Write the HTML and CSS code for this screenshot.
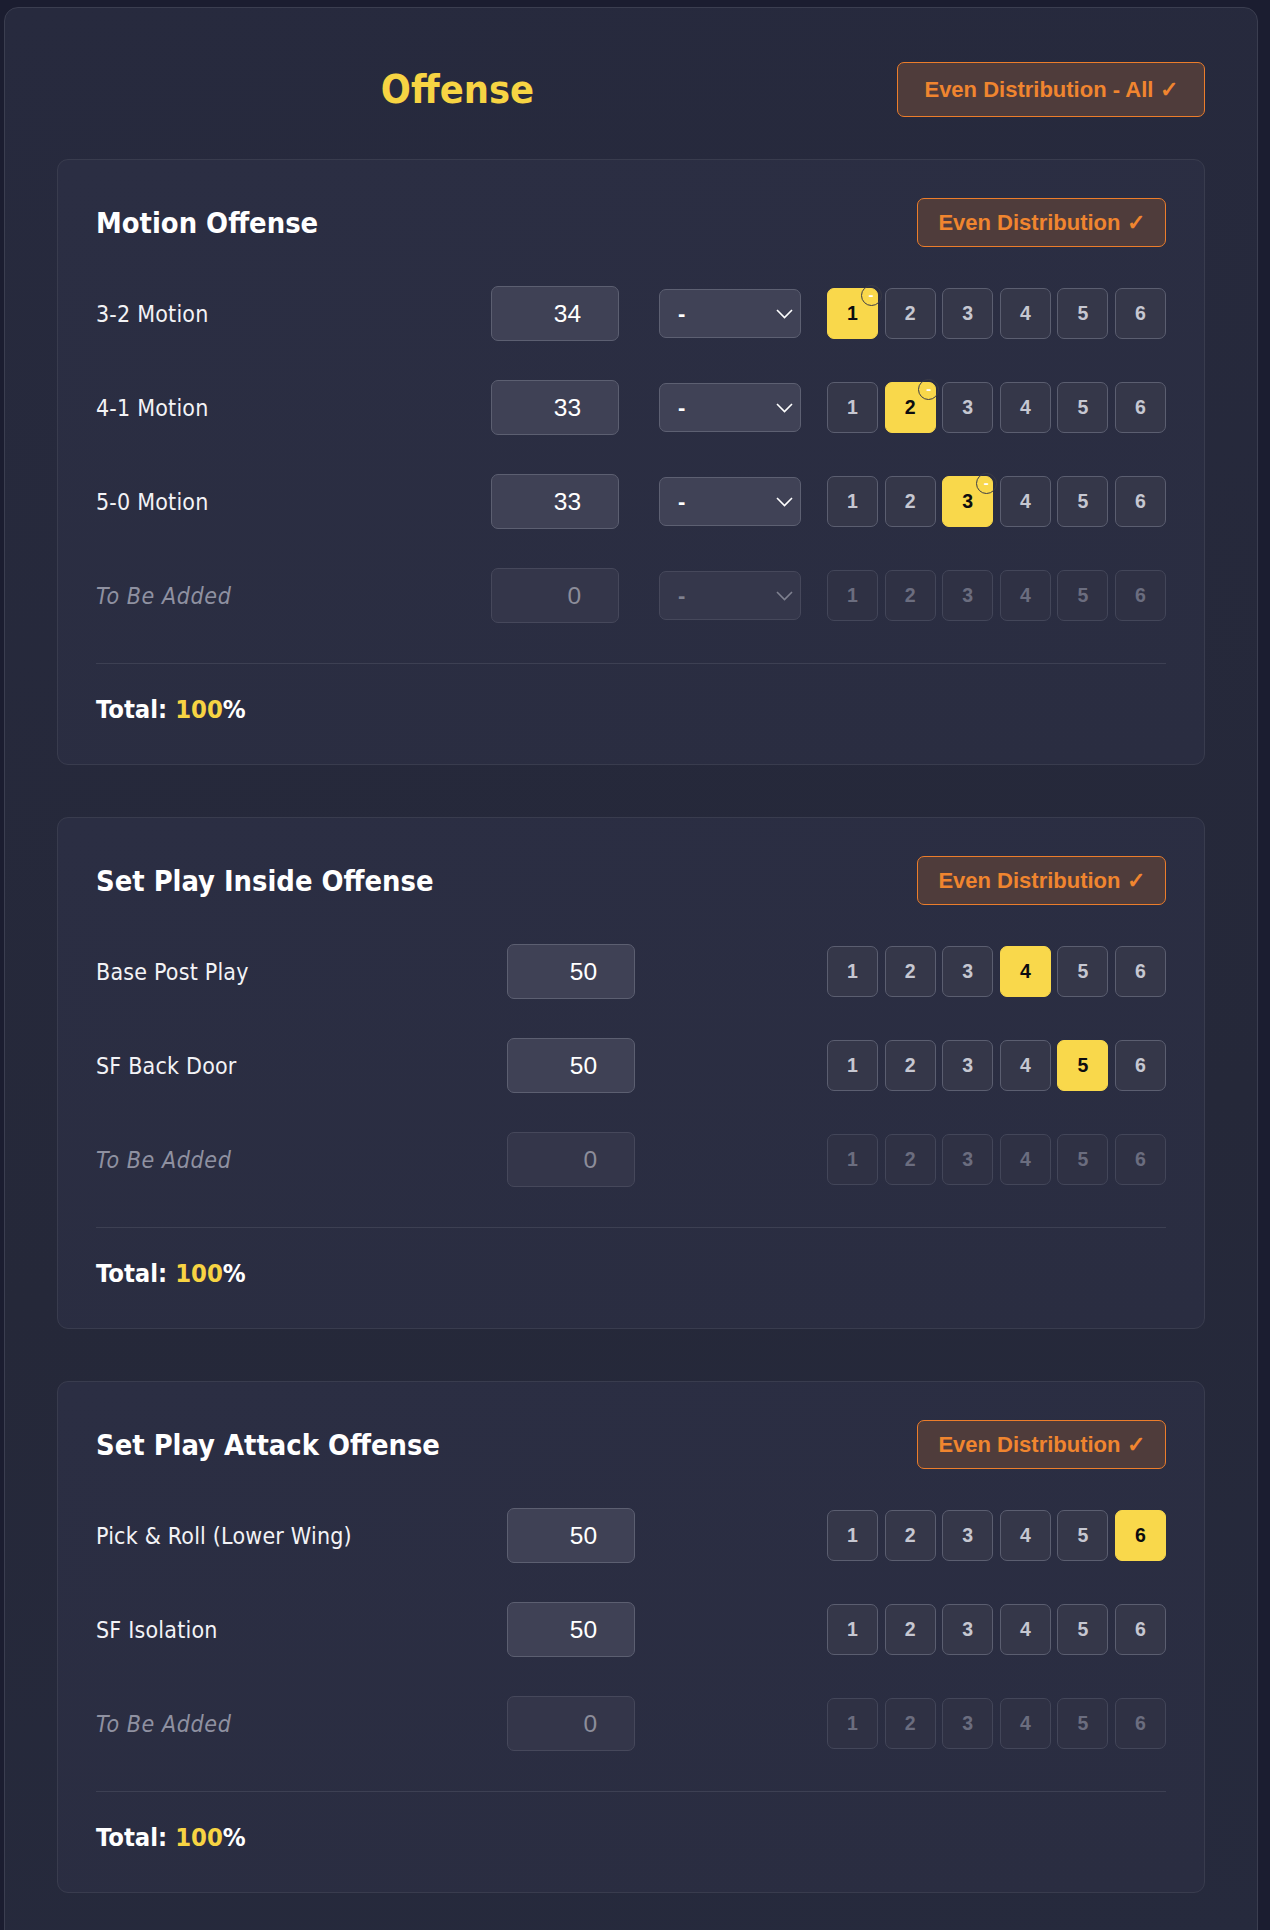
FILE: index.html
```html
<!DOCTYPE html>
<html lang="en">
<head>
<meta charset="utf-8">
<title>Offense</title>
<link rel="stylesheet" href="styles.css">
</head>
<body>
<div class="panel">
  <div class="panel-head">
    <h1 class="title">Offense</h1>
    <button class="even-btn even-all">Even Distribution - All ✓</button>
  </div>

  <div class="cards">
    <section class="card with-select">
      <div class="card-head">
        <h2>Motion Offense</h2>
        <button class="even-btn even-one">Even Distribution ✓</button>
      </div>
      <div class="rows">
        <div class="row">
          <span class="label">3-2 Motion</span>
          <input class="pct" type="number" value="34">
          <div class="select-wrap"><select class="sel"><option>-</option></select><svg class="chev" width="17" height="10" viewBox="0 0 17 10"><polyline points="1,1 8.5,8.5 16,1" fill="none" stroke="currentColor" stroke-width="1.6"/></svg></div>
          <div class="slots">
            <button class="slot active">1<span class="badge">-</span></button>
            <button class="slot">2</button>
            <button class="slot">3</button>
            <button class="slot">4</button>
            <button class="slot">5</button>
            <button class="slot">6</button>
          </div>
        </div>
        <div class="row">
          <span class="label">4-1 Motion</span>
          <input class="pct" type="number" value="33">
          <div class="select-wrap"><select class="sel"><option>-</option></select><svg class="chev" width="17" height="10" viewBox="0 0 17 10"><polyline points="1,1 8.5,8.5 16,1" fill="none" stroke="currentColor" stroke-width="1.6"/></svg></div>
          <div class="slots">
            <button class="slot">1</button>
            <button class="slot active">2<span class="badge">-</span></button>
            <button class="slot">3</button>
            <button class="slot">4</button>
            <button class="slot">5</button>
            <button class="slot">6</button>
          </div>
        </div>
        <div class="row">
          <span class="label">5-0 Motion</span>
          <input class="pct" type="number" value="33">
          <div class="select-wrap"><select class="sel"><option>-</option></select><svg class="chev" width="17" height="10" viewBox="0 0 17 10"><polyline points="1,1 8.5,8.5 16,1" fill="none" stroke="currentColor" stroke-width="1.6"/></svg></div>
          <div class="slots">
            <button class="slot">1</button>
            <button class="slot">2</button>
            <button class="slot active">3<span class="badge">-</span></button>
            <button class="slot">4</button>
            <button class="slot">5</button>
            <button class="slot">6</button>
          </div>
        </div>
        <div class="row disabled">
          <span class="label">To Be Added</span>
          <input class="pct" type="number" value="0" disabled>
          <div class="select-wrap off"><select class="sel" disabled><option>-</option></select><svg class="chev" width="17" height="10" viewBox="0 0 17 10"><polyline points="1,1 8.5,8.5 16,1" fill="none" stroke="currentColor" stroke-width="1.6"/></svg></div>
          <div class="slots">
            <button class="slot" disabled>1</button>
            <button class="slot" disabled>2</button>
            <button class="slot" disabled>3</button>
            <button class="slot" disabled>4</button>
            <button class="slot" disabled>5</button>
            <button class="slot" disabled>6</button>
          </div>
        </div>
      </div>
      <div class="total">Total: <span class="hl">100</span>%</div>
    </section>

    <section class="card plain">
      <div class="card-head">
        <h2>Set Play Inside Offense</h2>
        <button class="even-btn even-one">Even Distribution ✓</button>
      </div>
      <div class="rows">
        <div class="row">
          <span class="label">Base Post Play</span>
          <input class="pct" type="number" value="50">
          <div class="slots">
            <button class="slot">1</button>
            <button class="slot">2</button>
            <button class="slot">3</button>
            <button class="slot active">4</button>
            <button class="slot">5</button>
            <button class="slot">6</button>
          </div>
        </div>
        <div class="row">
          <span class="label">SF Back Door</span>
          <input class="pct" type="number" value="50">
          <div class="slots">
            <button class="slot">1</button>
            <button class="slot">2</button>
            <button class="slot">3</button>
            <button class="slot">4</button>
            <button class="slot active">5</button>
            <button class="slot">6</button>
          </div>
        </div>
        <div class="row disabled">
          <span class="label">To Be Added</span>
          <input class="pct" type="number" value="0" disabled>
          <div class="slots">
            <button class="slot" disabled>1</button>
            <button class="slot" disabled>2</button>
            <button class="slot" disabled>3</button>
            <button class="slot" disabled>4</button>
            <button class="slot" disabled>5</button>
            <button class="slot" disabled>6</button>
          </div>
        </div>
      </div>
      <div class="total">Total: <span class="hl">100</span>%</div>
    </section>

    <section class="card plain">
      <div class="card-head">
        <h2>Set Play Attack Offense</h2>
        <button class="even-btn even-one">Even Distribution ✓</button>
      </div>
      <div class="rows">
        <div class="row">
          <span class="label">Pick &amp; Roll (Lower Wing)</span>
          <input class="pct" type="number" value="50">
          <div class="slots">
            <button class="slot">1</button>
            <button class="slot">2</button>
            <button class="slot">3</button>
            <button class="slot">4</button>
            <button class="slot">5</button>
            <button class="slot active">6</button>
          </div>
        </div>
        <div class="row">
          <span class="label">SF Isolation</span>
          <input class="pct" type="number" value="50">
          <div class="slots">
            <button class="slot">1</button>
            <button class="slot">2</button>
            <button class="slot">3</button>
            <button class="slot">4</button>
            <button class="slot">5</button>
            <button class="slot">6</button>
          </div>
        </div>
        <div class="row disabled">
          <span class="label">To Be Added</span>
          <input class="pct" type="number" value="0" disabled>
          <div class="slots">
            <button class="slot" disabled>1</button>
            <button class="slot" disabled>2</button>
            <button class="slot" disabled>3</button>
            <button class="slot" disabled>4</button>
            <button class="slot" disabled>5</button>
            <button class="slot" disabled>6</button>
          </div>
        </div>
      </div>
      <div class="total">Total: <span class="hl">100</span>%</div>
    </section>
  </div>
</div>
</body>
</html>
```

FILE: styles.css
```css
* { box-sizing: border-box; }

html, body {
  margin: 0;
  background: #1b1d30;
}

body {
  padding: 7px 12px 0 4px;
  font-family: "DejaVu Sans Condensed", "DejaVu Sans", sans-serif;
  color: #f3f3f6;
}

.panel {
  border: 1px solid #3b3e50;
  border-radius: 14px;
  background: linear-gradient(170deg, #272a3e 0%, #252839 60%, #262a3d 100%);
  padding: 54px 52px 60px;
}

.panel-head {
  display: flex;
  align-items: center;
  margin-bottom: 42px;
}

.title {
  flex: 1;
  margin: 0 39px 0 0;
  text-align: center;
  color: #f7d443;
  font-size: 39.4px;
  font-weight: 700;
  line-height: 55px;
}

.even-btn {
  font-family: "Liberation Sans", Arial, sans-serif;
  font-weight: 700;
  font-size: 22px;
  color: #f0852f;
  background: #4f3c3b;
  border: 1px solid #ec7d2b;
  border-radius: 7px;
  padding: 0;
  text-align: center;
}

.even-all {
  width: 308px;
  height: 55px;
}

.even-one {
  width: 249px;
  height: 49px;
}

.cards {
  display: flex;
  flex-direction: column;
  gap: 52px;
}

.card {
  border: 1px solid #393c4e;
  border-radius: 11px;
  background: linear-gradient(170deg, #2b2e43 0%, #2a2d41 100%);
  padding: 38px;
}

.card-head {
  display: flex;
  justify-content: space-between;
  align-items: center;
  height: 49px;
  margin-bottom: 39px;
}

.card-head h2 {
  margin: 0;
  font-size: 28.8px;
  font-weight: 700;
  color: #ffffff;
}

.rows {
  display: flex;
  flex-direction: column;
  gap: 39px;
}

.row {
  display: flex;
  align-items: center;
  height: 55px;
}

.label {
  flex: 1;
  font-size: 23px;
  letter-spacing: 0.2px;
  color: #f3f3f6;
}

.row.disabled .label {
  font-style: italic;
  letter-spacing: 0.6px;
  color: #8f91a1;
}

.pct {
  appearance: textfield;
  -moz-appearance: textfield;
  width: 128px;
  height: 55px;
  margin: 0 40px 0 0;
  padding: 0 37px 0 10px;
  text-align: right;
  font-family: "Liberation Sans", Arial, sans-serif;
  font-size: 24.5px;
  color: #ffffff;
  background: #3f4155;
  border: 1px solid #5c5f71;
  border-radius: 7px;
  outline: none;
}

.pct::-webkit-inner-spin-button,
.pct::-webkit-outer-spin-button {
  -webkit-appearance: none;
  margin: 0;
}

.card.plain .pct {
  margin-right: 192px;
}

.pct:disabled {
  background: #34364a;
  border-color: #46485b;
  color: #8c8d9a;
}

.select-wrap {
  position: relative;
  width: 141.5px;
  height: 49px;
  margin-right: 26.5px;
  color: #ffffff;
}

.select-wrap.off {
  color: #7f8190;
}

.sel {
  appearance: none;
  -webkit-appearance: none;
  width: 100%;
  height: 100%;
  margin: 0;
  padding: 0 0 0 18px;
  font-family: "Liberation Sans", Arial, sans-serif;
  font-size: 22px;
  font-weight: 700;
  color: #ffffff;
  background: #404256;
  border: 1px solid #5d6072;
  border-radius: 7px;
  outline: none;
}

.sel:disabled {
  background: #35374b;
  border-color: #46485b;
  color: #7f8190;
  opacity: 1;
}

.chev {
  position: absolute;
  right: 8px;
  top: 20px;
  pointer-events: none;
}

.slots {
  display: flex;
  gap: 6.6px;
}

.slot {
  position: relative;
  width: 51px;
  height: 51px;
  padding: 0;
  font-family: "Liberation Sans", Arial, sans-serif;
  font-size: 19.5px;
  font-weight: 700;
  color: #c6c7d1;
  background: #353749;
  border: 1px solid #5b5e70;
  border-radius: 7px;
}

.slot.active {
  background: #f9d84b;
  border-color: #f9d84b;
  color: #0c0c10;
}

.slot:disabled {
  background: #2f3144;
  border-color: #434659;
  color: #6b6d7f;
}

.badge {
  position: absolute;
  top: -4.5px;
  right: -4.5px;
  width: 21px;
  height: 21px;
  display: flex;
  align-items: center;
  justify-content: center;
  padding-bottom: 2px;
  border: 1px solid #3a3b47;
  border-radius: 50%;
  font-family: "Liberation Sans", Arial, sans-serif;
  font-size: 15px;
  line-height: 1;
  font-weight: 700;
  color: #ffffff;
}

.total {
  margin-top: 40px;
  border-top: 1px solid #3d4053;
  padding: 31px 0 3px;
  line-height: 28px;
  font-size: 25.4px;
  font-weight: 700;
  color: #ffffff;
}

.hl {
  color: #f7d443;
}
```
